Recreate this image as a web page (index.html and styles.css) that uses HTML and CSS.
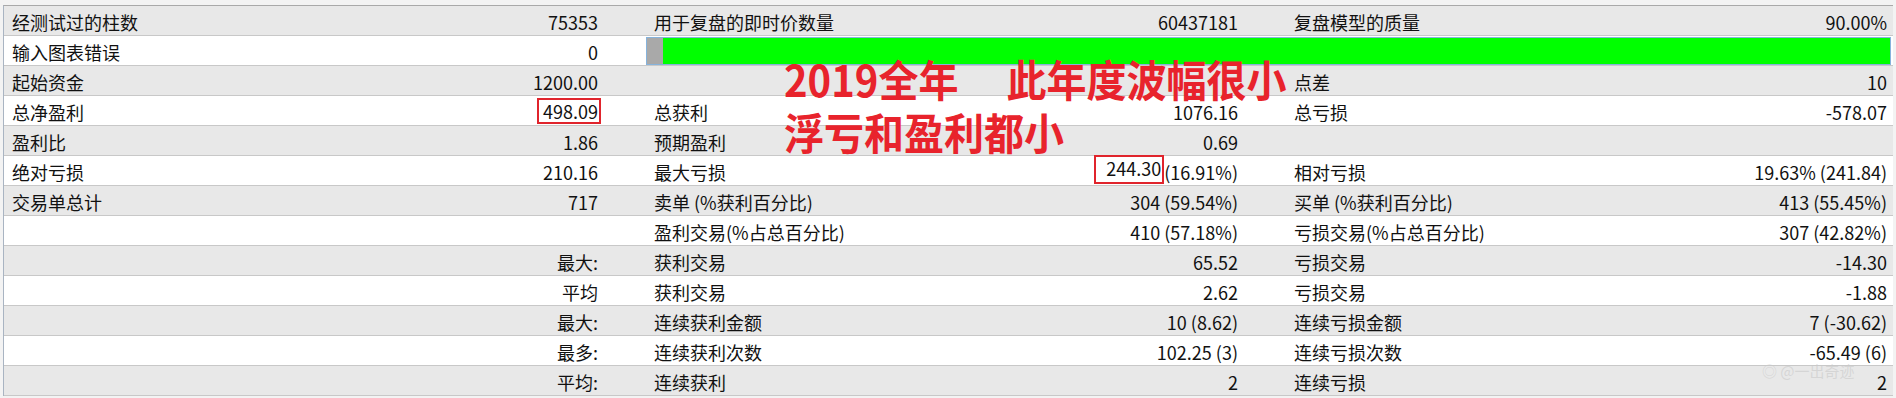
FILE: index.html
```html
<!DOCTYPE html>
<html lang="zh-CN">
<head>
<meta charset="utf-8">
<title>测试报告</title>
<link rel="stylesheet" href="styles.css">
</head>
<body>
<div class="page">
  <div class="report">
    <div class="row gray">
      <div class="cell label">经测试过的柱数</div><div class="cell value">75353</div>
      <div class="cell label">用于复盘的即时价数量</div><div class="cell value">60437181</div>
      <div class="cell label">复盘模型的质量</div><div class="cell value last">90.00%</div>
    </div>
    <div class="row">
      <div class="cell label">输入图表错误</div><div class="cell value">0</div>
      <div class="cell barcell">
        <div class="bar"><div class="bar-gray"></div><div class="bar-green"></div></div>
      </div>
    </div>
    <div class="row gray">
      <div class="cell label">起始资金</div><div class="cell value">1200.00</div>
      <div class="cell label"></div><div class="cell value"></div>
      <div class="cell label">点差</div><div class="cell value last">10</div>
    </div>
    <div class="row">
      <div class="cell label">总净盈利</div><div class="cell value"><span class="box">498.09</span></div>
      <div class="cell label">总获利</div><div class="cell value">1076.16</div>
      <div class="cell label">总亏损</div><div class="cell value last">-578.07</div>
    </div>
    <div class="row gray">
      <div class="cell label">盈利比</div><div class="cell value">1.86</div>
      <div class="cell label">预期盈利</div><div class="cell value">0.69</div>
      <div class="cell label"></div><div class="cell value last"></div>
    </div>
    <div class="row">
      <div class="cell label">绝对亏损</div><div class="cell value">210.16</div>
      <div class="cell label">最大亏损</div><div class="cell value"><span class="box box2">244.30</span>(16.91%)</div>
      <div class="cell label">相对亏损</div><div class="cell value last">19.63% (241.84)</div>
    </div>
    <div class="row gray">
      <div class="cell label">交易单总计</div><div class="cell value">717</div>
      <div class="cell label">卖单 (%获利百分比)</div><div class="cell value">304 (59.54%)</div>
      <div class="cell label">买单 (%获利百分比)</div><div class="cell value last">413 (55.45%)</div>
    </div>
    <div class="row">
      <div class="cell label"></div><div class="cell value"></div>
      <div class="cell label">盈利交易(%占总百分比)</div><div class="cell value">410 (57.18%)</div>
      <div class="cell label">亏损交易(%占总百分比)</div><div class="cell value last">307 (42.82%)</div>
    </div>
    <div class="row gray">
      <div class="cell label"></div><div class="cell value">最大:</div>
      <div class="cell label">获利交易</div><div class="cell value">65.52</div>
      <div class="cell label">亏损交易</div><div class="cell value last">-14.30</div>
    </div>
    <div class="row">
      <div class="cell label"></div><div class="cell value">平均</div>
      <div class="cell label">获利交易</div><div class="cell value">2.62</div>
      <div class="cell label">亏损交易</div><div class="cell value last">-1.88</div>
    </div>
    <div class="row gray">
      <div class="cell label"></div><div class="cell value">最大:</div>
      <div class="cell label">连续获利金额</div><div class="cell value">10 (8.62)</div>
      <div class="cell label">连续亏损金额</div><div class="cell value last">7 (-30.62)</div>
    </div>
    <div class="row">
      <div class="cell label"></div><div class="cell value">最多:</div>
      <div class="cell label">连续获利次数</div><div class="cell value">102.25 (3)</div>
      <div class="cell label">连续亏损次数</div><div class="cell value last">-65.49 (6)</div>
    </div>
    <div class="row gray">
      <div class="cell label"></div><div class="cell value">平均:</div>
      <div class="cell label">连续获利</div><div class="cell value">2</div>
      <div class="cell label">连续亏损</div><div class="cell value last">2</div>
    </div>
  </div>
  <div class="note">
    <div class="note-line">2019全年<span class="gap"></span>此年度波幅很小</div>
    <div class="note-line">浮亏和盈利都小</div>
  </div>
  <div class="watermark">◎ @一出奇迹</div>
</div>
</body>
</html>
```

FILE: styles.css
```css
html, body {
  margin: 0;
  padding: 0;
  background: #f3f3f3;
}

.page {
  position: relative;
  width: 1896px;
  height: 398px;
  overflow: hidden;
  padding-top: 5px;
  padding-left: 3px;
  box-sizing: border-box;
  font-family: "Noto Sans CJK SC", "Noto Sans", sans-serif;
  font-size: 18px;
  color: #111;
}

.report {
  width: 1890px;
  border-top: 1px solid #a9a9a9;
  border-left: 1px solid #a9b4c2;
  box-sizing: border-box;
}

.row {
  display: grid;
  grid-template-columns: 299px 343px 300px 340px 300px 307px;
  height: 30px;
  box-sizing: border-box;
  border-bottom: 1px solid #c8c8c8;
  background: #ffffff;
}

.row.gray {
  background: #e8e8e8;
}

.cell {
  display: flex;
  align-items: center;
  padding-top: 3px;
  white-space: nowrap;
  line-height: 1;
}

.label {
  padding-left: 8px;
}

.value {
  justify-content: flex-end;
  padding-right: 48px;
}

.value.last {
  padding-right: 6px;
}

.barcell {
  grid-column: 3 / 7;
  padding: 0 2px 0 0;
  align-items: center;
}

.bar {
  display: flex;
  width: 100%;
  height: 28px;
  box-sizing: border-box;
  border: 1px solid #86b3dc;
  margin-top: 1px;
}

.bar-gray {
  width: 16px;
  background: #a9a9a9;
}

.bar-green {
  flex: 1;
  background: #00ff00;
}

.box {
  display: inline-block;
  border: 2px solid #e0242c;
  padding: 2px 1px 2px 4px;
  margin: -3px -3px -1px 0;
}

.box2 {
  padding-left: 10px;
  padding-right: 1px;
  margin: -6px 0 0 0;
  padding-bottom: 5px;
}

.note {
  position: absolute;
  left: 784px;
  top: 53px;
  color: #e8232c;
  font-family: "Noto Sans CJK SC", sans-serif;
  font-weight: 700;
  font-size: 40px;
  line-height: 53px;
}

.gap {
  display: inline-block;
  width: 48px;
}

.note-line {
  white-space: nowrap;
  transform: scaleY(1.08);
  transform-origin: left center;
}

.watermark {
  position: absolute;
  left: 1762px;
  top: 360px;
  font-size: 15px;
  color: rgba(200, 200, 200, 0.6);
  white-space: nowrap;
}
```
